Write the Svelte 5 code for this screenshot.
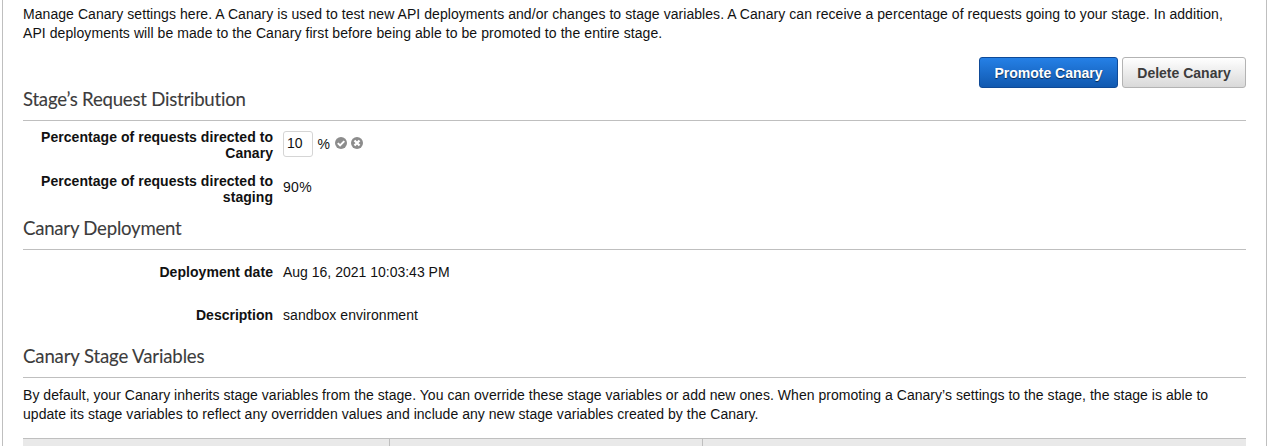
<script>
  let percent = $state('10');
</script>

<main class="panel">
  <div class="intro">
    <p class="l1">Manage Canary settings here. A Canary is used to test new API deployments and/or changes to stage variables. A Canary can receive a percentage of requests going to your stage. In addition,</p>
    <p class="l2">API deployments will be made to the Canary first before being able to be promoted to the entire stage.</p>
  </div>

  <section class="distribution">
    <div class="actions">
      <button class="btn primary">Promote Canary</button>
      <button class="btn">Delete Canary</button>
    </div>
    <h2 class="h-dist">Stage’s Request Distribution</h2>
  </section>
  <dl class="fields compact">
    <dt>Percentage of requests directed to<br />Canary</dt>
    <dd>
      <input type="text" bind:value={percent} />
      <span class="unit">%</span>
      <svg class="icon" width="12" height="12" viewBox="0 0 12 12">
        <circle cx="6" cy="6" r="6" fill="#8c8c8c" />
        <path d="M2.8 6.1 5.1 8.4 9.3 4.1" fill="none" stroke="#fff" stroke-width="2" />
      </svg>
      <svg class="icon" width="12" height="12" viewBox="0 0 12 12">
        <circle cx="6" cy="6" r="6" fill="#8c8c8c" />
        <path d="M3.5 3.5 8.5 8.5M8.5 3.5 3.5 8.5" fill="none" stroke="#fff" stroke-width="2.3" />
      </svg>
    </dd>
    <dt>Percentage of requests directed to<br />staging</dt>
    <dd class="ninety">90%</dd>
  </dl>

  <h2 class="h-dep">Canary Deployment</h2>
  <dl class="fields single">
    <dt>Deployment date</dt>
    <dd class="dval">Aug 16, 2021 10:03:43 PM</dd>
    <dt class="desc">Description</dt>
    <dd class="sval">sandbox environment</dd>
  </dl>

  <h2 class="h-var">Canary Stage Variables</h2>
  <div class="note">
    <p class="l3">By default, your Canary inherits stage variables from the stage. You can override these stage variables or add new ones. When promoting a Canary’s settings to the stage, the stage is able to</p>
    <p class="l4">update its stage variables to reflect any overridden values and include any new stage variables created by the Canary.</p>
  </div>
  <div class="table-head"><span></span><span></span><span></span></div>
</main>

<style>
  :global(body) {
    margin: 0;
    background: #fff;
    overflow: hidden;
  }
  .panel {
    box-sizing: border-box;
    width: 1265px;
    height: 446px;
    margin-left: 2px;
    padding: 5px 20px 0;
    border: solid #bfbfbf;
    border-width: 0 1px;
    overflow: hidden;
    font: 14px/19px "Liberation Sans", Arial, sans-serif;
    color: #111;
  }
  p, h2, dl, dd { margin: 0; }
  p { white-space: nowrap; }
  .l1 { letter-spacing: 0.057px; }
  .l2 { letter-spacing: 0.072px; }
  .l3 { letter-spacing: 0.038px; }
  .l4 { letter-spacing: 0.036px; }
  .intro { height: 52px; }
  .distribution {
    display: flex;
    flex-direction: column;
    height: 63px;
    border-bottom: 1px solid #bfbfbf;
  }
  .actions {
    display: flex;
    justify-content: flex-end;
    gap: 4px;
    height: 31px;
  }
  .btn {
    box-sizing: border-box;
    width: 124px;
    height: 31px;
    padding: 1px 0 0;
    border: 1px solid #b3b3b3;
    border-radius: 3px;
    background: linear-gradient(#fff, #d9d9d9);
    color: #3c3c3c;
    font: bold 14px/19px "Liberation Sans", Arial, sans-serif;
    white-space: nowrap;
  }
  .primary {
    width: 139px;
    border-color: #0f4a97;
    background: linear-gradient(#2580e6, #1159b0);
    color: #fff;
    text-shadow: 0 1px 1px rgba(0, 0, 0, 0.6);
  }
  h2 {
    box-sizing: border-box;
    border-bottom: 1px solid #bfbfbf;
    color: #3c3c3c;
    font: 400 18.6px/22px Lato, sans-serif;
    font-variant-ligatures: none;
    letter-spacing: -0.23px;
    -webkit-text-stroke: 0.1px #3c3c3c;
    white-space: nowrap;
  }
  .h-dist {
    height: 31px;
    border: 0;
  }
  .fields {
    display: grid;
    grid-template-columns: 250px 1fr;
    column-gap: 10px;
    line-height: 16px;
    white-space: nowrap;
  }
  dt {
    text-align: right;
    font-weight: bold;
    letter-spacing: 0.05px;
  }
  .desc { letter-spacing: 0; }
  .compact {
    grid-template-rows: 44px 44px;
    height: 88px;
    padding-top: 8px;
  }
  dd {
    display: flex;
    align-items: flex-start;
  }
  .sval { letter-spacing: 0.06px; }
  input {
    box-sizing: border-box;
    width: 30px;
    height: 26px;
    margin-top: 2px;
    padding: 0 0 2px 3px;
    border: 1px solid #d5d5d5;
    border-radius: 3px;
    outline: 0;
    color: #111;
    font: 14px "Liberation Sans", Arial, sans-serif;
  }
  .unit {
    width: 13px;
    margin: 7px 4px 0 4.5px;
  }
  .icon { margin: 8px 4px 0 0; }
  .ninety {
    padding-top: 6px;
    letter-spacing: 0.3px;
  }
  .h-dep { height: 33px; }
  .single {
    grid-template-rows: 43px 38px;
    height: 81px;
    padding-top: 14px;
  }
  .h-var {
    height: 33px;
    letter-spacing: -0.14px;
  }
  .note {
    height: 52px;
    padding-top: 8px;
  }
  .table-head {
    display: grid;
    grid-template-columns: 366px 313px 1fr;
    height: 8px;
    border-top: 1px solid #bfbfbf;
    background: #e9e9e9;
  }
  .table-head span + span { border-left: 1px solid #bfbfbf; }
</style>
